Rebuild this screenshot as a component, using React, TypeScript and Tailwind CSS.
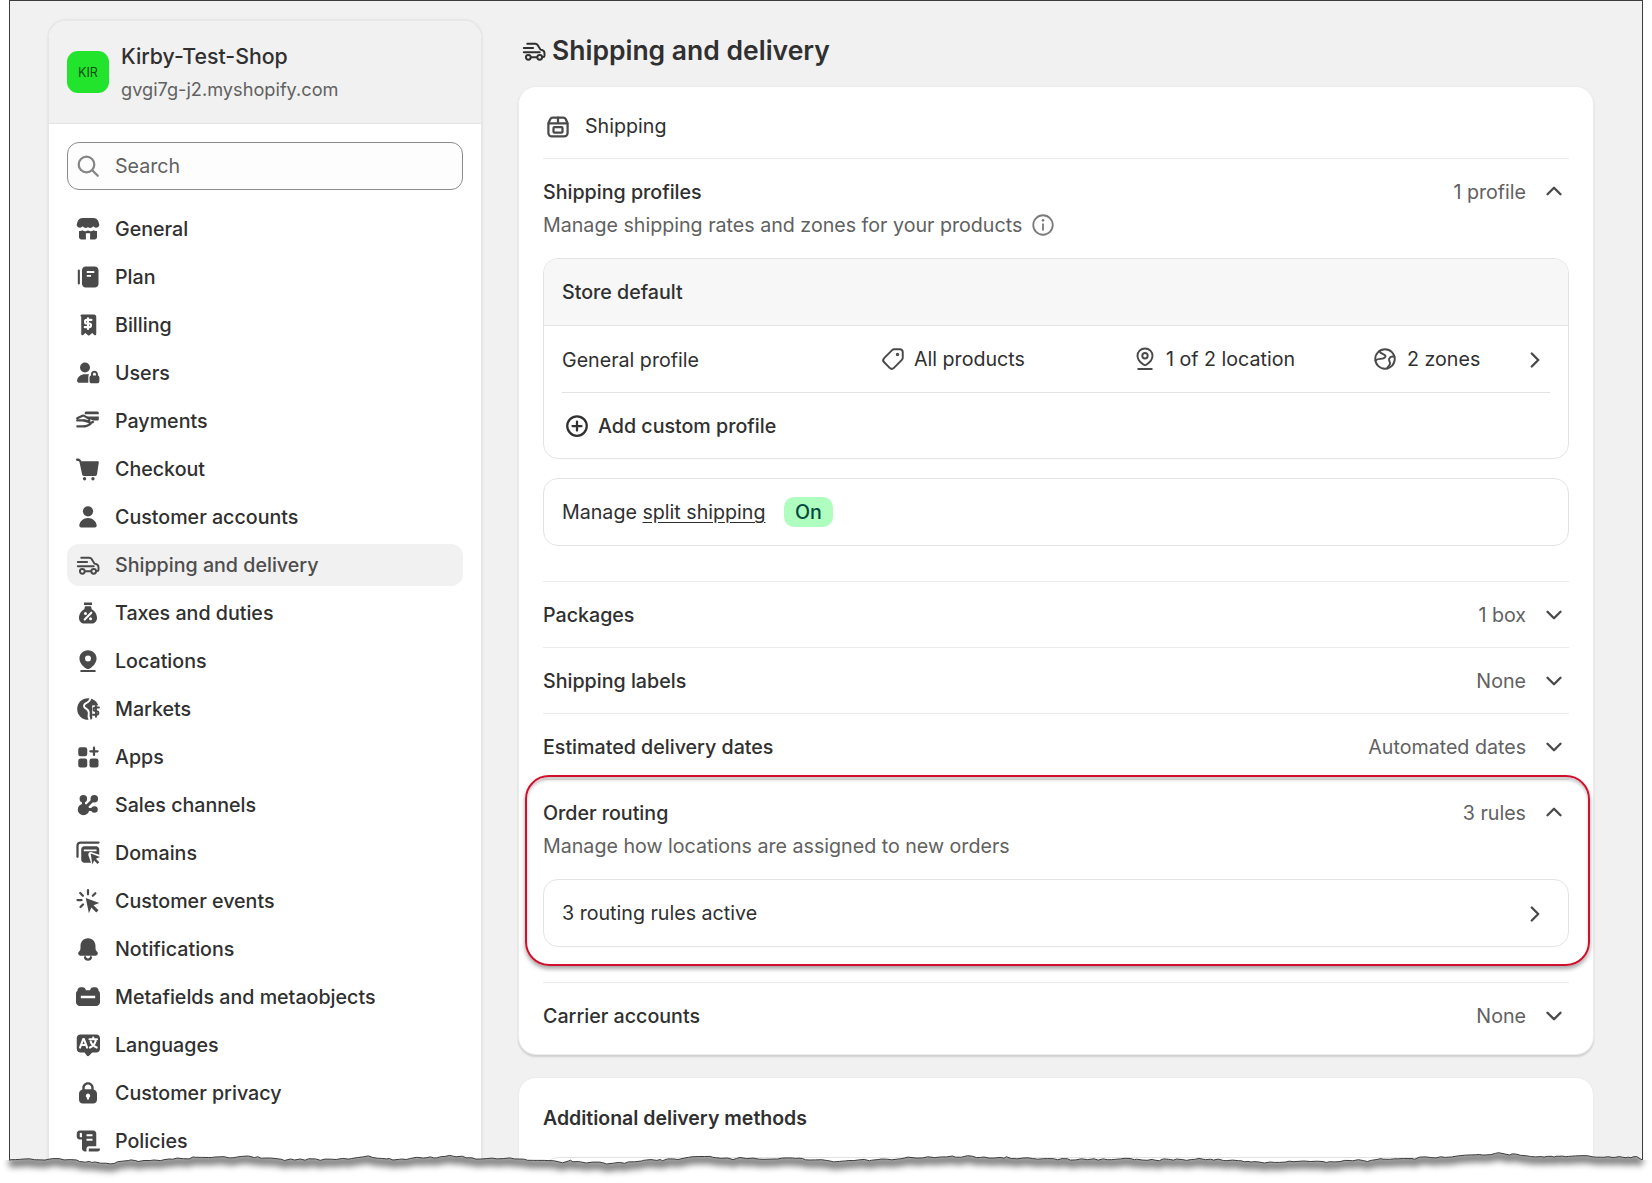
import type { ReactNode } from 'react';
import { ChevronDown, ChevronRight, ChevronUp } from 'lucide-react';

/** Polaris style icons, drawn on a 20 unit grid */
function Ic({ children, className = 'w-[30px] h-[30px] text-[#4a4a4a]' }: { children: ReactNode; className?: string }) {
  return (
    <svg viewBox="0 0 20 20" fill="currentColor" className={`shrink-0 ${className}`}>
      {children}
    </svg>
  );
}

const line = { fill: 'none', stroke: 'currentColor', strokeWidth: 1.5, strokeLinecap: 'round', strokeLinejoin: 'round' } as const;
const cut = { fill: 'none', stroke: '#fff', strokeWidth: 1.4, strokeLinecap: 'round', strokeLinejoin: 'round' } as const;

const truck = (
  <g {...line} strokeWidth={1.3}>
    <path d="M5.500 5.200h5.300c.7 0 1.300.3 1.700.9l1.900 3 .9.2c1 .3 1.700 1.200 1.700 2.200v1.600c0 .5-.4.9-.9.9h-.3" />
    <path d="M3.200 8h6.200M3.200 10.800h10.600M8 14.200h4" />
    <circle cx="6.200" cy="14.200" r="1.600" />
    <circle cx="13.800" cy="14.200" r="1.600" />
  </g>
);

const navIcons: Record<string, ReactNode> = {
  General: (
    <>
      <path d="M6.500 2.700h7c1.800 0 3 1 3.500 2.500l.5 1.800c.4 1.800-2.700 3-4 1.200-1 1.400-2.700 1.400-3.500.5-.8.9-2.500.9-3.500-.5-1.300 1.800-4.400.6-4-1.200l.5-1.800C3.500 3.700 4.700 2.700 6.500 2.700Z" />
      <path fillRule="evenodd" d="M4 11.300c1 .1 1.800-.1 2.300-.5 1.100 1 2.600 1 3.700 0 1.100 1 2.600 1 3.700 0 .5.4 1.300.6 2.300.5v4.200c0 .8-.7 1.500-1.500 1.500h-9C4.700 17 4 16.300 4 15.500v-4.200ZM8.600 12.800V17h2.800v-4.200H8.600Z" />
    </>
  ),
  Plan: (
    <>
      <rect x="3.200" y="5" width="1.400" height="10" rx=".7" />
      <path fillRule="evenodd" d="M8.500 3h6c1.400 0 2.500 1.100 2.500 2.500v9c0 1.400-1.100 2.500-2.500 2.500h-6C7.100 17 6 15.900 6 14.500v-9C6 4.100 7.100 3 8.500 3Zm.7 3v1.300h5V6h-5Zm0 2.600v1.300h2.800V8.600H9.200Z" />
    </>
  ),
  Billing: (
    <>
      <path d="M6 3h8c.9 0 1.500.7 1.500 1.500V16c0 .7-.8 1.100-1.300.6l-1.400-1.300-1.800 1.500c-.3.200-.7.200-1 0L8.200 15.300l-1.400 1.300c-.5.500-1.300.1-1.300-.6V4.500C4.500 3.700 5.100 3 6 3Z" />
      <path {...cut} d="M12.300 6.600H9.200c-.7 0-1.200.5-1.200 1.200s.5 1.200 1.200 1.200h1.600c.7 0 1.200.5 1.200 1.200s-.5 1.200-1.200 1.200H7.800M10 5.500v7.200" />
    </>
  ),
  Users: (
    <>
      <circle cx="8" cy="6.300" r="3.300" />
      <path d="M8 10.800c-2.800 0-5 1.700-5.300 4.200-.1.800.5 1.500 1.300 1.500h6.200v-3.800c0-.7.200-1.300.5-1.800-.8-.1-1.700-.1-2.700-.1Z" />
      <path fillRule="evenodd" d="M14.300 8.500c1.300 0 2.300 1 2.300 2.300v.9c.6.200 1 .8 1 1.400v2.400c0 .8-.6 1.400-1.400 1.400h-3.800c-.8 0-1.400-.6-1.400-1.400v-2.400c0-.6.400-1.200 1-1.400v-.9c0-1.300 1-2.300 2.300-2.300Zm1 3.100v-.8c0-.6-.4-1-1-1s-1 .4-1 1v.8h2Z" />
    </>
  ),
  Payments: (
    <>
      <path d="M8.500 3.600h7.800c.5 0 .9.400.9.900v1H7.800v-.2c0-1 .2-1.700.7-1.700ZM7.800 7h9.400v1.800c0 .5-.4.900-.9.900h-3.100L9 7.400 7.800 7Z" />
      <path {...line} d="M2.800 8.200 6 6.600c.5-.2 1-.3 1.500 0l3 1.800c.9.500.3 1.900-.7 1.600L7.600 9.500M2.800 9.600h4l4.800 1.400c.6.100 1.200 0 1.700-.3M2.900 13.600h3.700c2.300 0 3.600-.5 5.200-1.900" />
    </>
  ),
  Checkout: (
    <>
      <path d="M2.800 3c1.300 0 2.200.4 2.600 1.500l.1.300h11c.5 0 .8.400.7.900l-1.200 8c-.1.500-.5.900-1.100.9H7.200c-.6 0-1-.4-1.100-.9L4.300 5.300c-.2-.5-.6-.7-1.500-.7-.4 0-.8-.4-.8-.8s.4-.8.800-.8Z" />
      <circle cx="7.700" cy="16.500" r="1.100" />
      <circle cx="13.300" cy="16.500" r="1.100" />
    </>
  ),
  'Customer accounts': (
    <>
      <circle cx="10" cy="6.200" r="3.400" />
      <path d="M10 10.700c-3.100 0-5.500 2.200-5.800 5-.1.700.5 1.300 1.200 1.300h9.200c.7 0 1.300-.6 1.200-1.300-.3-2.800-2.700-5-5.800-5Z" />
    </>
  ),
  'Shipping and delivery': truck,
  'Taxes and duties': (
    <>
      <path d="M7.300 3h5.400v1.700H7.300z" />
      <path d="M8 5.500h4l.5 2c2 1 3.500 3.400 3.500 5.800 0 2.300-1.700 3.700-3.500 3.700h-5C5.700 17 4 15.600 4 13.300c0-2.400 1.500-4.800 3.500-5.800l.5-2Z" />
      <path {...cut} d="m12.200 9.800-4.400 4.600" />
      <circle cx="8.300" cy="10.300" r="1" fill="#fff" />
      <circle cx="11.700" cy="13.900" r="1" fill="#fff" />
    </>
  ),
  Locations: (
    <>
      <path fillRule="evenodd" d="M10 2.800c3.300 0 5.700 2.500 5.700 5.500 0 2.700-2.100 5.200-4.500 6.700-.7.500-1.700.5-2.400 0-2.400-1.500-4.500-4-4.500-6.700 0-3 2.400-5.500 5.700-5.500Zm0 3.600a2 2 0 1 0 0 4 2 2 0 0 0 0-4Z" />
      <rect x="4.800" y="16" width="10.400" height="1.300" rx=".6" />
    </>
  ),
  Markets: (
    <>
      <circle cx="10" cy="10" r="7.200" />
      <path d="M12.800 7.600h8v12h-8z" fill="#fff" />
      <path fill="none" stroke="#fff" strokeWidth="1.300" strokeLinecap="round" d="M11.500 3.200c-.3 1.700-1.700 2.400-3 3-1.500.7-1.500 2.400-.3 3.200 1.400.9 2.700 1.700 2.300 3.600-.3 1.300-.2 2.600.5 4" />
      <path {...line} strokeWidth={1.300} d="M17.300 9h-2.400c-.7 0-1.200.5-1.200 1.200s.5 1.200 1.200 1.200h.8c.7 0 1.200.5 1.200 1.200s-.5 1.200-1.200 1.200h-2.400M15.300 8v7.200" />
    </>
  ),
  Apps: (
    <>
      <rect x="3.500" y="3.500" width="6" height="6" rx="1.500" />
      <rect x="3.500" y="11" width="6" height="6" rx="1.500" />
      <rect x="11" y="11" width="6" height="6" rx="1.500" />
      <path {...line} d="M14 3.800v4.800M11.600 6.200h4.800" />
    </>
  ),
  'Sales channels': (
    <>
      <circle cx="6.900" cy="5.800" r="2.500" />
      <circle cx="14.200" cy="5.800" r="2.500" />
      <circle cx="7" cy="13" r="3.800" />
      <circle cx="14.300" cy="13" r="2.200" />
      <path {...line} strokeWidth={2} d="M7 6v7l7-7M7 13h7" />
    </>
  ),
  Domains: (
    <>
      <path {...line} d="M3 12.500V5c0-1.100.9-2 2-2h12" />
      <path fillRule="evenodd" d="M7.500 5.500h8c1 0 2 .9 2 2v3.700l-5-1.700c-1.400-.5-2.700.8-2.200 2.200l1.700 4.800H7.500c-1.100 0-2-.9-2-2V7.500c0-1.100.9-2 2-2Zm-.3 2.200v1.200h8.500V7.700H7.200Z" />
      <path d="m11.800 10.400 6.200 2.200-2.700 1.200 2.200 2.300-1.200 1.200-2.200-2.300-1.200 2.700-1.100-7.300Z" />
    </>
  ),
  'Customer events': (
    <>
      <path d="m8.500 8 9 3.300-3.800 1.600 3.300 3.300-1.500 1.500-3.300-3.300-1.600 3.800L8.500 8Z" />
      <path {...line} d="M10 2.700v2.800M4.800 4.700l1.800 1.800M14.900 4.800l-1.700 1.700M3 9.400h2.700M5 14l1.700-1.700" />
    </>
  ),
  Notifications: (
    <>
      <path d="M10 2.800c-3 0-5 2.400-5 5.200v1.300c0 1-.3 1.700-1.100 2.600-.9 1-.3 2.600 1.100 2.600h10c1.400 0 2-1.600 1.100-2.600-.8-.9-1.100-1.600-1.100-2.600V8c0-2.800-2-5.200-5-5.200Z" />
      <path {...line} d="M8 15.500c.2 1 1 1.600 2 1.600s1.800-.6 2-1.600" />
    </>
  ),
  'Metafields and metaobjects': (
    <>
      <path fillRule="evenodd" d="M5 3.500h1.500c.9 0 1.600.6 1.900 1.400l.2.600h2.800l.2-.6c.3-.8 1-1.400 1.900-1.400H15c1.100 0 2 .9 2 2v.3c.6.400 1 1.100 1 1.900v5.800c0 1.300-1.100 2.500-2.500 2.500h-11C3.100 16 2 14.800 2 13.500V7.700c0-.8.400-1.500 1-1.900v-.3c0-1.100.9-2 2-2Zm.200 5.700v1.600h9.600V9.200H5.200Z" />
    </>
  ),
  Languages: (
    <>
      <path d="M5 3h10.500C17 3 18 4 18 5.500v7c0 1.500-1 2.500-2.500 2.500h-2.700l-2.100 2.200c-.4.400-1 .4-1.400 0L7.700 15H5c-1.500 0-2.500-1-2.500-2.500v-7C2.500 4 3.500 3 5 3Z" />
      <path {...cut} d="m4.700 11.700 2.100-5.600h.5l2.100 5.600M5.400 10h3.300M11 6.200h5M13.500 5.100v1.100M15.300 6.200c-.3 2.600-2 4.600-4 5.500M11.800 7.800c.6 1.700 2.300 3.200 4 3.900" />
    </>
  ),
  'Customer privacy': (
    <path fillRule="evenodd" d="M10 2.800c2.200 0 3.800 1.700 3.800 3.800v1.100c1.200.4 2.200 1.500 2.200 2.800v4c0 1.400-1.100 2.500-2.500 2.500h-7C5.100 17 4 15.900 4 14.500v-4c0-1.300 1-2.400 2.200-2.800V6.600c0-2.100 1.600-3.800 3.800-3.800Zm2.200 4.700V6.600c0-1.200-1-2.200-2.200-2.200S7.800 5.400 7.800 6.600v.9h4.400ZM10 10.300a1.500 1.500 0 0 0-.7 2.800v1.200h1.400v-1.200a1.500 1.500 0 0 0-.7-2.800Z" />
  ),
  Policies: (
    <>
      <path fillRule="evenodd" d="M4.500 3h9c1.100 0 2 .9 2 2v8.500h-5c-.8 0-1.500.7-1.500 1.500v2H8c-1.100 0-2-.9-2-2V9H4.500C3.100 9 2.500 8 2.500 7V5c0-1.100.9-2 2-2ZM6 7.500V5a.8.8 0 0 0-1.500 0v2c0 .3.200.5.500.5h1Zm3-2v1.300h4V5.500H9Zm0 3v1.300h4V8.500H9Z" />
      <path d="M10.500 15h7.500v.5c0 .8-.7 1.500-1.500 1.500h-6v-2Z" />
    </>
  ),
};

const navItems = Object.keys(navIcons);

function SideNav() {
  return (
    <aside className="w-[434px] h-[1200px] shrink-0 rounded-t-[18px] bg-white border-x border-t border-[#e6e6e6] shadow-[0_0_3px_rgba(0,0,0,0.1)] overflow-hidden">
      <div className="h-[103px] flex items-center gap-[12px] pl-[18px] bg-[#f1f1f1] border-b border-[#e3e3e3]">
        <div className="w-[42px] h-[42px] rounded-[11px] bg-[#23e42c] flex items-center justify-center pt-[2px] text-[12.500px] text-[#0b4d10]">KIR</div>
        <div className="mt-[1px]">
          <div className="text-[21.300px] leading-[30px] font-medium text-[#303030]">Kirby-Test-Shop</div>
          <div className="mt-[3px] text-[18.200px] leading-[30px] text-[#616161]">gvgi7g-j2.myshopify.com</div>
        </div>
      </div>
      <div className="mx-[18px] mt-[18px] h-[48px] rounded-[12px] border border-[#8a8a8a] bg-[#fdfdfd] flex items-center gap-[12px] pl-[5px] text-[#616161]">
        <Ic className="w-[30px] h-[30px] text-[#858585]">
          <circle cx="9" cy="9" r="5.200" {...line} />
          <path {...line} d="m13 13 3.500 3.500" />
        </Ic>
        <span className="mt-[2px]">Search</span>
      </div>
      <nav className="mx-[18px] mt-[18px] flex flex-col gap-[6px]">
        {navItems.map((name) => {
          const active = name === 'Shipping and delivery';
          return (
            <div
              key={name}
              className={`h-[42px] rounded-[12px] flex items-center gap-[12px] pl-[6px] font-medium ${active ? 'bg-[#f1f1f1] text-[#4d4d4d]' : 'text-[#303030]'}`}
            >
              <Ic>{navIcons[name]}</Ic>
              <span className="mt-[2px]">{name}</span>
            </div>
          );
        })}
      </nav>
    </aside>
  );
}

function Row({ title, value }: { title: string; value: string }) {
  return (
    <div className="h-[66px] border-t border-[#ebebeb] flex items-center justify-between">
      <span className="mt-[2px] font-medium text-[#303030]">{title}</span>
      <span className="flex items-center gap-[13px] text-[#616161]">
        <span className="mt-[2px]">{value}</span>
        <ChevronDown className="w-[26px] h-[26px] mt-[2px] mx-[2px] text-[#4a4a4a]" strokeWidth={2.2} />
      </span>
    </div>
  );
}

function OpenHead({ title, value, desc, info }: { title: string; value: string; desc: string; info?: boolean }) {
  return (
    <>
      <div className="h-[30px] flex items-center justify-between">
        <span className="mt-[2px] font-medium text-[#303030]">{title}</span>
        <span className="flex items-center gap-[13px] text-[#616161]">
          <span className="mt-[2px]">{value}</span>
          <ChevronUp className="w-[26px] h-[26px] -mt-[2px] mx-[2px] text-[#4a4a4a]" strokeWidth={2.2} />
        </span>
      </div>
      <div className="mt-[3px] h-[30px] flex items-center gap-[6px] text-[#616161]">
        <span className="mt-[2px]">{desc}</span>
        {info && (
          <Ic className="w-[30px] h-[30px] text-[#7a7a7a]">
            <circle cx="10" cy="10" r="6.500" {...line} strokeWidth={1.2} />
            <path {...line} strokeWidth={1.2} d="M10 9.500v3.800" />
            <circle cx="10" cy="6.900" r=".85" />
          </Ic>
        )}
      </div>
    </>
  );
}

function Cell({ icon, children, className, gap = 'gap-[6px]' }: { icon: ReactNode; children: ReactNode; className: string; gap?: string }) {
  return (
    <span className={`flex items-center ${gap} ${className}`}>
      <Ic className="w-[30px] h-[30px] text-[#4a4a4a]">{icon}</Ic>
      <span className="mt-[2px]">{children}</span>
    </span>
  );
}

function ProfileBox() {
  return (
    <div className="rounded-[15px] border border-[#e3e3e3] overflow-hidden">
      <div className="h-[67px] px-[18px] flex items-center bg-[#f7f7f7] border-b border-[#e3e3e3] font-medium text-[#303030]">
        <span className="mt-[2px]">Store default</span>
      </div>
      <div className="mx-[18px] h-[67px] flex items-center border-b border-[#e3e3e3] text-[#303030]">
        <span className="w-[316px] mt-[3px]">General profile</span>
        <Cell
          className="w-[252px]"
          icon={
            <g {...line} strokeWidth={1.3}>
              <path d="M10.800 3.500h3.700c1.100 0 2 .9 2 2v3.700c0 .5-.2 1-.6 1.400l-5.300 5.300c-.8.800-2 .8-2.800 0l-3.700-3.700c-.8-.8-.8-2 0-2.800l5.300-5.300c.4-.4.9-.6 1.400-.6Z" />
              <circle cx="13" cy="7" r=".5" />
            </g>
          }
        >
          All products
        </Cell>
        <Cell
          className="w-[240px]"
          icon={
            <g {...line} strokeWidth={1.3}>
              <path d="M10 3c2.900 0 5 2.200 5 4.800 0 2.400-1.900 4.500-3.900 5.900-.7.500-1.500.5-2.200 0C6.900 12.300 5 10.200 5 7.800 5 5.200 7.100 3 10 3Z" />
              <circle cx="10" cy="7.800" r="1.800" />
              <path d="M5.500 16.700h9" />
            </g>
          }
        >
          1 of 2 location
        </Cell>
        <Cell
          className="flex-1"
          gap="gap-[7px]"
          icon={
            <g {...line} strokeWidth={1.3}>
              <circle cx="10" cy="10" r="6.500" />
              <path d="M6.300 4.700c.8 2 2.800 1.600 3.800 2.900.9 1.300-1.300 2.300-3.100 2.300-1.200 0-2.500.3-3.300 1.200M16.300 8.500c-1.600-.4-3 .1-3.500 1.200-.6 1.400.9 2.300.5 3.700-.3 1-1.300 1.700-1.800 2.900" />
            </g>
          }
        >
          2 zones
        </Cell>
        <ChevronRight className="w-[26px] h-[26px] mr-[2px] mt-[1px] text-[#4a4a4a]" strokeWidth={2.2} />
      </div>
      <div className="h-[65px] pl-[18px] flex items-center gap-[6px] font-medium text-[#303030]">
        <Ic className="w-[30px] h-[30px] text-[#303030]">
          <circle cx="10" cy="10" r="6.500" {...line} />
          <path {...line} d="M10 7v6M7 10h6" />
        </Ic>
        <span className="mt-[3px]">Add custom profile</span>
      </div>
    </div>
  );
}

function MainCard() {
  return (
    <section className="rounded-[18px] bg-white border border-[#ebebeb] shadow-[0_2px_2px_rgba(0,0,0,0.14)] pl-[24px] pr-[24px]">
      <div className="h-[72px] pt-[8px] flex items-center gap-[12px] border-b border-[#ebebeb] text-[#303030]">
        <Ic className="w-[30px] h-[30px] text-[#4a4a4a]">
          <g {...line}>
            <path d="M6.500 3.700h7c.7 0 1.300.4 1.600 1l1.300 2.800v6.500c0 1.300-1 2.300-2.300 2.300H5.900c-1.300 0-2.300-1-2.300-2.300V7.500l1.300-2.800c.3-.6.900-1 1.600-1Z" />
            <path d="M3.800 7.500h12.400M10 3.800v3.600" />
            <rect x="7" y="10" width="6" height="3.700" rx=".6" />
          </g>
        </Ic>
        <span className="mt-[1px]">Shipping</span>
      </div>
      <div className="pt-[18px] pb-[35px]">
        <OpenHead title="Shipping profiles" value="1 profile" desc="Manage shipping rates and zones for your products" info />
        <div className="mt-[18px]">
          <ProfileBox />
        </div>
        <div className="mt-[19px] h-[68px] rounded-[15px] border border-[#e3e3e3] px-[18px] flex items-center text-[#303030]">
          <span className="mt-[2px]">
            Manage <span className="underline underline-offset-[3px]">split shipping</span>
          </span>
          <span className="ml-[18px] h-[30px] px-[11.500px] rounded-[10px] bg-[#affebf] text-[#014b40] font-medium flex items-center">
            <span className="mt-[1px]">On</span>
          </span>
        </div>
      </div>
      <Row title="Packages" value="1 box" />
      <Row title="Shipping labels" value="None" />
      <Row title="Estimated delivery dates" value="Automated dates" />
      <div className="border-t border-[#ebebeb] pt-[18px] pb-[35px]">
        <OpenHead title="Order routing" value="3 rules" desc="Manage how locations are assigned to new orders" />
        <div className="mt-[18px] h-[68px] rounded-[15px] border border-[#e3e3e3] px-[18px] flex items-center justify-between text-[#303030]">
          <span className="mt-[2px]">3 routing rules active</span>
          <ChevronRight className="w-[26px] h-[26px] mr-[2px] mt-[1px] text-[#4a4a4a]" strokeWidth={2.2} />
        </div>
      </div>
      <div className="pb-[6px]">
        <Row title="Carrier accounts" value="None" />
      </div>
    </section>
  );
}

/** Ripped paper edge along the bottom of the screenshot */
function tearPath() {
  let seed = 11;
  const rnd = () => {
    seed = (seed * 16807) % 2147483647;
    return seed / 2147483647;
  };
  let d = 'M9 30';
  let drift = 0;
  for (let x = 12; x < 1642; x += 2 + rnd() * 5) {
    drift += (rnd() - 0.5) * 2;
    drift *= 0.92;
    const slow = Math.sin(x / 41) * 1.4 + Math.sin(x / 97 + 1) * 1.4;
    d += ` L${x.toFixed(1)} ${(29 + slow + drift + (rnd() - 0.5) * 1.2).toFixed(1)}`;
  }
  return d + ' L1642 30';
}

function TornEdge() {
  const edge = tearPath();
  const area = `${edge} L1652 30 L1652 53 L0 53 L0 30 Z`;
  return (
    <svg width={1652} height={53} className="absolute left-0 top-[1130px]">
      <defs>
        <clipPath id="below">
          <path d={area} />
        </clipPath>
        <filter id="soft" x="-5%" y="-200%" width="110%" height="500%">
          <feGaussianBlur stdDeviation="3" />
        </filter>
      </defs>
      <path d={area} fill="#fff" />
      <g clipPath="url(#below)">
        <path d={edge} transform="translate(0 3)" fill="none" stroke="#000" strokeOpacity="0.5" strokeWidth="9" filter="url(#soft)" />
      </g>
      <path d={edge} fill="none" stroke="#3c3c3c" strokeWidth="1" />
    </svg>
  );
}

export default function App() {
  return (
    <div className="relative w-[1652px] h-[1183px] overflow-hidden bg-white font-['Inter',sans-serif] text-[19.650px]">
      <div className="ml-[9px] w-[1634px] h-[1170px] bg-[#f1f1f1] border-x border-t border-[#3c3c3c] overflow-hidden">
        <div className="flex items-start pl-[38px] pt-[19px]">
          <SideNav />
          <main className="ml-[36px] w-[1076px] -mt-[19px]">
            <div className="h-[85px] pt-[14px] pl-[1px] flex items-center gap-[3px] text-[#303030] text-[26.500px] font-semibold">
              <Ic className="w-[30px] h-[30px] text-[#303030]">{truck}</Ic>
              Shipping and delivery
            </div>
            <MainCard />
            <section className="mt-[22px] h-[200px] rounded-[18px] bg-white border border-[#ebebeb] px-[24px] pt-[26px]">
              <div className="h-[30px] flex items-center font-semibold text-[19.500px] text-[#303030]">Additional delivery methods</div>
              <div className="mt-[23px] h-[100px] rounded-[15px] border border-[#e3e3e3]" />
            </section>
          </main>
        </div>
      </div>
      <div className="absolute left-[525px] top-[775px] w-[1065px] h-[191px] rounded-[24px] border-2 border-[#d0102c] shadow-[0_3px_4px_rgba(0,0,0,0.35),inset_0_3px_3px_rgba(0,0,0,0.2)]" />
      <TornEdge />
    </div>
  );
}
